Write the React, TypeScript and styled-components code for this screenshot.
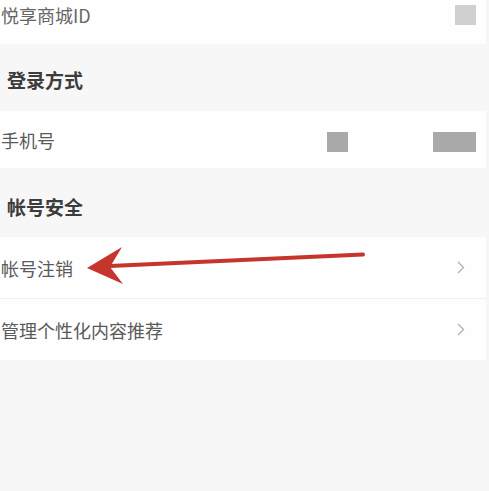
import styled, { createGlobalStyle } from 'styled-components';

const GlobalStyle = createGlobalStyle`
  html, body {
    margin: 0;
    padding: 0;
    background: #f7f7f7;
  }
  body {
    font-family: "Noto Sans CJK SC", "Noto Sans", sans-serif;
  }
`;

const Page = styled.div`
  position: relative;
  width: 489px;
  height: 491px;
  overflow: hidden;
  background: #f7f7f7;
`;

const List = styled.div`
  width: 486px;
  display: flex;
  flex-direction: column;
`;

const Row = styled.div<{ $height: number; $pad?: number; $divider?: boolean }>`
  height: ${(p) => p.$height}px;
  box-sizing: border-box;
  padding: 0 10px ${(p) => p.$pad ?? 0}px 1px;
  display: flex;
  align-items: center;
  justify-content: space-between;
  background: #fefefe;
  border-bottom: ${(p) => (p.$divider ? '1px solid #efefef' : 'none')};
`;

const Label = styled.span<{ $muted?: boolean }>`
  font-size: 18px;
  line-height: 1;
  color: ${(p) => (p.$muted ? '#666666' : '#5a5a5a')};
`;

const SectionHeader = styled.div<{ $height: number; $top: number }>`
  height: ${(p) => p.$height}px;
  box-sizing: border-box;
  padding: ${(p) => p.$top}px 0 0 7px;
  display: flex;
  align-items: center;
  font-size: 19px;
  font-weight: 700;
  color: #3c3c3c;
`;

const Values = styled.div`
  display: flex;
  align-items: center;
  gap: 85px;
  margin-top: 4px;
`;

const Masked = styled.div<{ $w: number; $tone: string }>`
  width: ${(p) => p.$w}px;
  height: 20px;
  background: ${(p) => p.$tone};
`;

const Chevron = styled.svg`
  width: 8px;
  height: 13px;
  margin-right: 11px;
`;

const Arrow = styled.svg`
  position: absolute;
  left: 0;
  top: 0;
  pointer-events: none;
`;

function ChevronRight() {
  return (
    <Chevron viewBox="0 0 8 13">
      <path d="M1 1 L6.5 6.5 L1 12" fill="none" stroke="#b0b0b0" strokeWidth="1.3" />
    </Chevron>
  );
}

export default function App() {
  return (
    <>
      <GlobalStyle />
      <Page>
        <List>
          <Row $height={44} $pad={14}>
            <Label $muted>悦享商城ID</Label>
            <Masked $w={21} $tone="#d0d0d0" />
          </Row>
          <SectionHeader $height={67} $top={4}>登录方式</SectionHeader>
          <Row $height={57}>
            <Label>手机号</Label>
            <Values>
              <Masked $w={21} $tone="#a9a9a9" />
              <Masked $w={43} $tone="#a9a9a9" />
            </Values>
          </Row>
          <SectionHeader $height={69} $top={8}>帐号安全</SectionHeader>
          <Row $height={62} $divider>
            <Label>帐号注销</Label>
            <ChevronRight />
          </Row>
          <Row $height={61}>
            <Label>管理个性化内容推荐</Label>
            <ChevronRight />
          </Row>
        </List>
        <Arrow width="489" height="491" viewBox="0 0 489 491">
          <path d="M363 254.5 L110 266" stroke="#c5352c" strokeWidth="4" strokeLinecap="round" />
          <path d="M87 268 L122 247 L110 267 L123 284 Z" fill="#c5352c" />
        </Arrow>
      </Page>
    </>
  );
}
